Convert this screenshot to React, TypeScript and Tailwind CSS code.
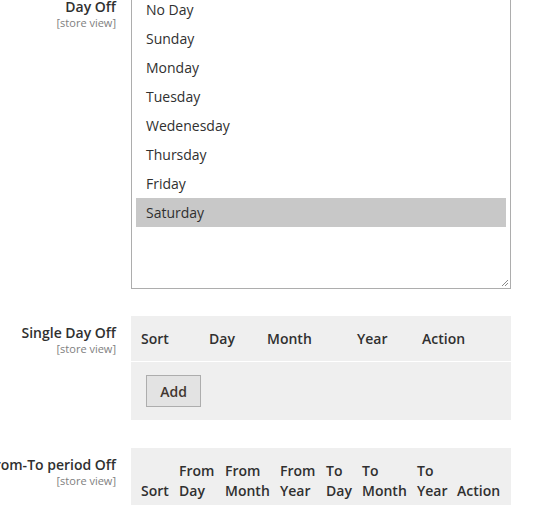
const days = ["No Day", "Sunday", "Monday", "Tuesday", "Wedenesday", "Thursday", "Friday", "Saturday"];

const singleCols = [
  { label: "Sort", w: "w-[68px]" },
  { label: "Day", w: "w-[58px]" },
  { label: "Month", w: "w-[90px]" },
  { label: "Year", w: "w-[65px]" },
  { label: "Action", w: "flex-1" },
];

const periodCols = [
  { top: "", bottom: "Sort", w: "w-[38px]" },
  { top: "From", bottom: "Day", w: "w-[46px]" },
  { top: "From", bottom: "Month", w: "w-[55px]" },
  { top: "From", bottom: "Year", w: "w-[46px]" },
  { top: "To", bottom: "Day", w: "w-[36px]" },
  { top: "To", bottom: "Month", w: "w-[55px]" },
  { top: "To", bottom: "Year", w: "w-[40px]" },
  { top: "", bottom: "Action", w: "flex-1" },
];

function FieldLabel({ title, pt }: { title: string; pt: string }) {
  return (
    <div className={`w-[116px] shrink-0 text-right ${pt}`}>
      <div className="text-[14px] font-semibold leading-[19px] text-[#303030] whitespace-nowrap">{title}</div>
      <div className="text-[11px] leading-[14px] text-[#808080]">[store view]</div>
    </div>
  );
}

export default function App() {
  return (
    <div
      className="w-[533px] h-[505px] overflow-hidden bg-white"
      style={{ fontFamily: '"Open Sans", "Liberation Sans", sans-serif' }}
    >
      <div className="mt-[-11px] flex flex-col">
        {/* Day Off */}
        <div className="flex gap-[15px]">
          <FieldLabel title="Day Off" pt="pt-[8px]" />
          <div className="relative w-[380px] h-[300px] border border-[#adadad] bg-white px-[4px] pt-[5px]">
            {days.map((d) => (
              <div
                key={d}
                className={`h-[29px] flex items-center pl-[10px] text-[14px] text-[#303030] ${
                  d === "Saturday" ? "bg-[#c8c8c8]" : ""
                }`}
              >
                {d}
              </div>
            ))}
            <svg className="absolute right-[1px] bottom-[1px]" width="8" height="8" viewBox="0 0 8 8">
              <line x1="1" y1="7" x2="7" y2="1" stroke="#8a8a8a" strokeWidth="1" />
              <line x1="4" y1="7" x2="7" y2="4" stroke="#8a8a8a" strokeWidth="1" />
            </svg>
          </div>
        </div>

        {/* Single Day Off */}
        <div className="flex gap-[15px] mt-[27px]">
          <FieldLabel title="Single Day Off" pt="pt-[7px]" />
          <div className="w-[380px] bg-[#efefef]">
            <div className="flex h-[46px] items-center border-b border-white">
              {singleCols.map((c) => (
                <div key={c.label} className={`${c.w} pl-[10px] text-[14px] font-semibold text-[#303030]`}>
                  {c.label}
                </div>
              ))}
            </div>
            <div className="h-[58px] flex items-center pl-[15px]">
              <button className="h-[32px] w-[55px] border border-[#adadad] bg-[#e3e3e3] text-[14px] font-semibold text-[#41362f]">
                Add
              </button>
            </div>
          </div>
        </div>

        {/* From-To period Off */}
        <div className="flex gap-[15px] mt-[28px]">
          <div className="w-[116px] shrink-0 flex justify-end overflow-visible">
            <div className="pt-[7px] text-right">
              <div className="text-[14px] font-semibold leading-[19px] text-[#303030] whitespace-nowrap">From-To period Off</div>
              <div className="text-[11px] leading-[14px] text-[#808080]">[store view]</div>
            </div>
          </div>
          <div className="w-[380px] bg-[#efefef] h-[80px]">
            <div className="flex pt-[13px] pl-[10px]">
              {periodCols.map((c, i) => (
                <div key={i} className={`${c.w} text-[14px] font-semibold leading-[20px] text-[#303030] whitespace-nowrap`}>
                  <div className="h-[20px]">{c.top}</div>
                  <div>{c.bottom}</div>
                </div>
              ))}
            </div>
          </div>
        </div>
      </div>
    </div>
  );
}
